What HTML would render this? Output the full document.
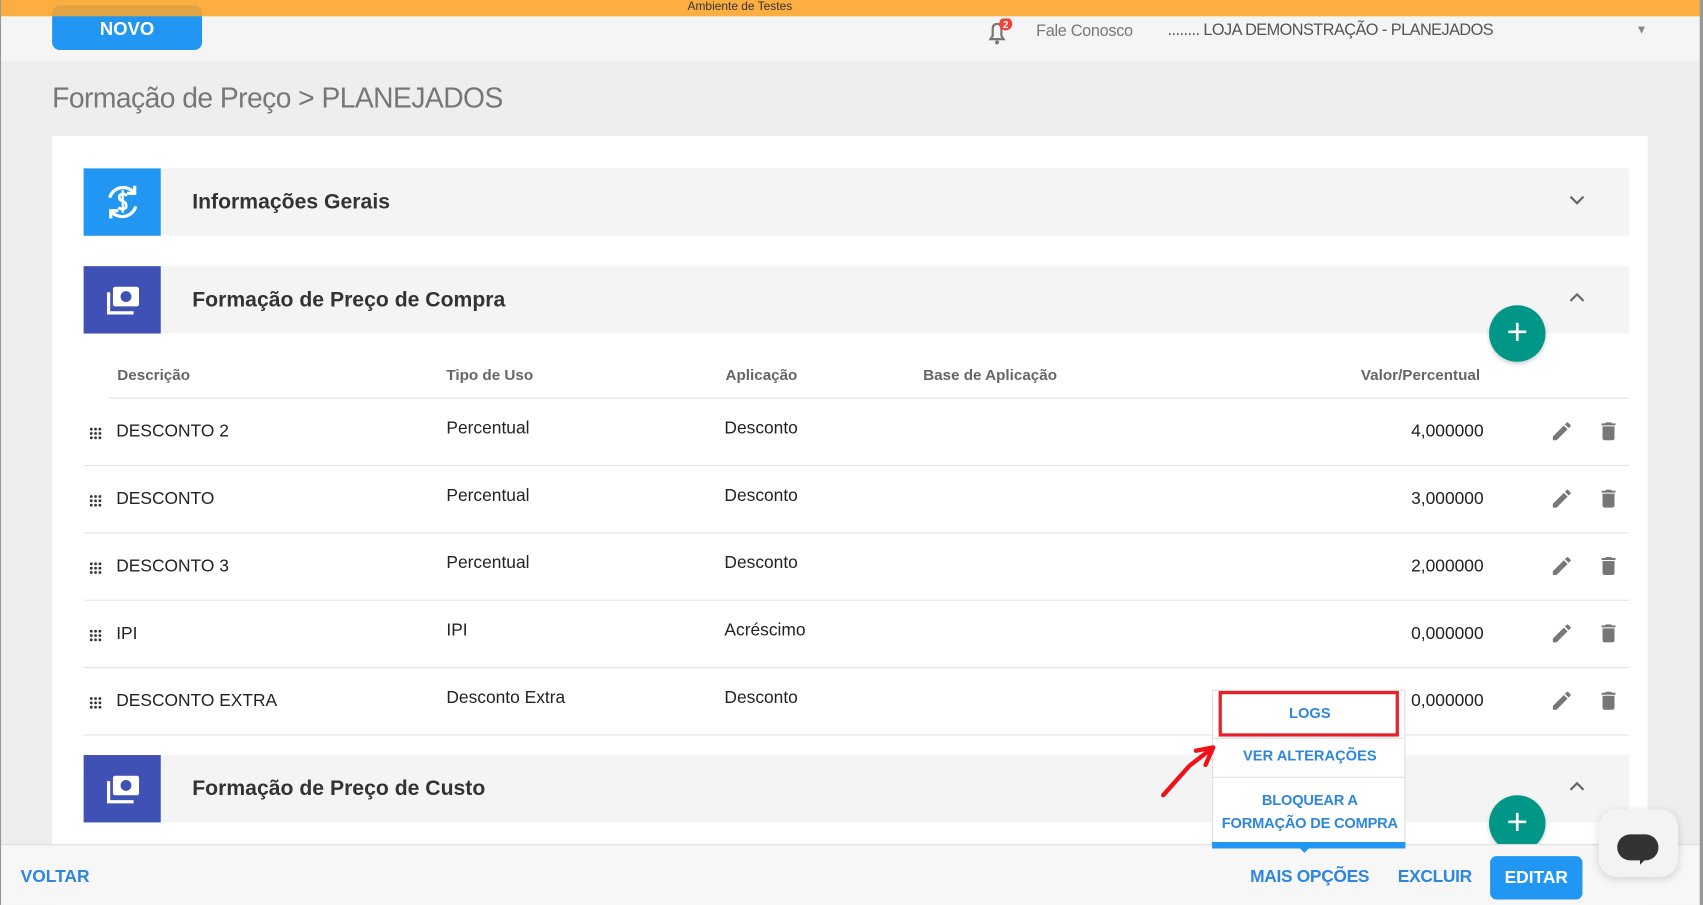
<!DOCTYPE html>
<html><head><meta charset="utf-8"><style>
*{box-sizing:border-box;margin:0;padding:0}
html,body{width:1703px;height:905px;overflow:hidden;background:#eee;font-family:"Liberation Sans",sans-serif}
#w{position:absolute;left:0;top:0;width:1568px;height:833px;transform:scale(1.0861,1.0864);transform-origin:0 0;background:#eeeeee;overflow:hidden}
.a{position:absolute}
.sec{position:absolute;left:77px;width:1423px;height:62px;background:#f4f4f4}
.sec .ic{position:absolute;left:0;top:0;width:71px;height:62px;display:flex;align-items:center;justify-content:center}
.sec .t{position:absolute;left:100px;top:20px;font-size:19.5px;color:#333;font-weight:bold;letter-spacing:0}
.chev{position:absolute;left:1367px;top:23px}
.th{position:absolute;top:337px;font-size:14px;font-weight:bold;color:#666}
.row{position:absolute;left:77px;width:1423px;height:62px;border-bottom:1px solid #e3e3e3}
.row span{position:absolute;top:22px;font-size:16px;color:#222}
.row .c1{left:30px;top:22px}.row .c2{left:334px;top:19px}.row .c3{left:590px;top:19px}
.row .v{right:134px;top:22px}
.dots{position:absolute;left:5px;top:26px;width:12px;height:12px;background-image:radial-gradient(circle,#333 1.3px,transparent 1.4px);background-size:4px 4px}
.pen{position:absolute;left:1350px;top:19px}
.trash{position:absolute;left:1393px;top:18px}
.fab{position:absolute;width:52px;height:52px;border-radius:50%;background:#009688;color:#fff;font-size:34px;line-height:50px;text-align:center;box-shadow:0 2px 4px rgba(0,0,0,.2)}
.mi{position:absolute;left:0;width:178px;text-align:center;font-size:13.5px;font-weight:bold;color:#2e86de}
</style></head><body><div id="w">
<div class="a" style="left:0;top:15px;width:1568px;height:41px;background:#f5f5f5"></div>
<div class="a" style="left:48px;top:5px;width:138px;height:41px;background:#2196f3;border-radius:7px;color:#fff;font-weight:bold;font-size:17px;text-align:center;line-height:44px">NOVO</div>
<div class="a" style="left:0;top:0;width:1568px;height:15px;background:rgba(255,165,40,.88)"></div>
<div class="a" style="left:633px;top:0;font-size:11px;color:#333;line-height:12px">Ambiente de Testes</div>
<svg class="a" style="left:906px;top:17px" width="30" height="26" viewBox="0 0 30 26"><path d="M6 19 L8 16 L8 10 Q8 5 12 5 Q16 5 16 10 L16 16 L18 19 Z" fill="none" stroke="#777" stroke-width="2"/><circle cx="12" cy="22" r="1.8" fill="#777"/><circle cx="20" cy="5" r="6" fill="#f44336"/><text x="20" y="9" font-size="9" font-weight="bold" fill="#fff" text-anchor="middle" font-family="Liberation Sans">2</text></svg>
<div class="a" style="left:954px;top:20px;font-size:15px;color:#777;letter-spacing:-0.3px">Fale Conosco</div>
<div class="a" style="left:1075px;top:19px;font-size:15px;color:#555;letter-spacing:-0.5px">........ LOJA DEMONSTRAÇÃO - PLANEJADOS</div>
<div class="a" style="left:1506px;top:22px;font-size:11px;color:#888">▼</div>
<div class="a" style="left:48px;top:75px;font-size:26px;color:#777;letter-spacing:-0.5px">Formação de Preço &gt; PLANEJADOS</div>
<div class="a" style="left:48px;top:125px;width:1469px;height:720px;background:#fff"></div>

<div class="sec" style="top:155px"><div class="ic" style="background:#2196f3"><svg width="40" height="40" viewBox="0 0 40 40" fill="none" stroke="#fff" stroke-width="3"><path d="M8 16 A13 13 0 0 1 31 12"/><path d="M32 24 A13 13 0 0 1 9 28"/><path d="M31 5 L31 12 L24 12" /><path d="M9 35 L9 28 L16 28"/><path d="M24 14 Q20 11 17 14 Q16 18 20 19 Q24 21 23 25 Q20 28 16 25" stroke-width="2.5"/><path d="M20 9 L20 30" stroke-width="2"/></svg></div><div class="t">Informações Gerais</div><svg class="chev" width="16" height="12"><path d="M2 3 L8 9 L14 3" fill="none" stroke="#666" stroke-width="2"/></svg></div>

<div class="sec" style="top:245px"><div class="ic" style="background:#3f51b5"><svg width="40" height="40" viewBox="0 0 40 40"><rect x="11" y="8" width="24" height="18" rx="2" fill="#fff"/><ellipse cx="23" cy="17" rx="5" ry="5" fill="#3f51b5"/><path d="M7 13 L7 32 L30 32" fill="none" stroke="#fff" stroke-width="3"/></svg></div><div class="t">Formação de Preço de Compra</div><svg class="chev" width="16" height="12"><path d="M2 9 L8 3 L14 9" fill="none" stroke="#666" stroke-width="2"/></svg></div>
<div class="fab" style="left:1371px;top:281px">+</div>

<div class="th" style="left:108px">Descrição</div>
<div class="th" style="left:411px">Tipo de Uso</div>
<div class="th" style="left:668px">Aplicação</div>
<div class="th" style="left:850px">Base de Aplicação</div>
<div class="th" style="left:1253px">Valor/Percentual</div>
<div class="a" style="left:100px;top:366px;width:1400px;height:1px;background:#e3e3e3"></div>

<div class="row" style="top:367px"><i class="dots"></i><span class="c1">DESCONTO 2</span><span class="c2">Percentual</span><span class="c3">Desconto</span><span class="v">4,000000</span><svg class="pen" width="22" height="22" viewBox="0 0 24 24"><path d="M3 17.25V21h3.75L17.81 9.94l-3.75-3.75L3 17.25zM20.71 7.04a1 1 0 0 0 0-1.41l-2.34-2.34a1 1 0 0 0-1.41 0l-1.83 1.83 3.75 3.75 1.83-1.83z" fill="#777"/></svg><svg class="trash" width="22" height="24" viewBox="0 0 24 24"><path d="M6 19c0 1.1.9 2 2 2h8c1.1 0 2-.9 2-2V7H6v12zM19 4h-3.5l-1-1h-5l-1 1H5v2h14V4z" fill="#777"/></svg></div>
<div class="row" style="top:429px"><i class="dots"></i><span class="c1">DESCONTO</span><span class="c2">Percentual</span><span class="c3">Desconto</span><span class="v">3,000000</span><svg class="pen" width="22" height="22" viewBox="0 0 24 24"><path d="M3 17.25V21h3.75L17.81 9.94l-3.75-3.75L3 17.25zM20.71 7.04a1 1 0 0 0 0-1.41l-2.34-2.34a1 1 0 0 0-1.41 0l-1.830 1.83 3.75 3.75 1.83-1.83z" fill="#777"/></svg><svg class="trash" width="22" height="24" viewBox="0 0 24 24"><path d="M6 19c0 1.1.9 2 2 2h8c1.1 0 2-.9 2-2V7H6v12zM19 4h-3.5l-1-1h-5l-1 1H5v2h14V4z" fill="#777"/></svg></div>
<div class="row" style="top:491px"><i class="dots"></i><span class="c1">DESCONTO 3</span><span class="c2">Percentual</span><span class="c3">Desconto</span><span class="v">2,000000</span><svg class="pen" width="22" height="22" viewBox="0 0 24 24"><path d="M3 17.25V21h3.75L17.81 9.94l-3.75-3.75L3 17.25zM20.71 7.04a1 1 0 0 0 0-1.41l-2.34-2.34a1 1 0 0 0-1.41 0l-1.83 1.83 3.75 3.75 1.83-1.83z" fill="#777"/></svg><svg class="trash" width="22" height="24" viewBox="0 0 24 24"><path d="M6 19c0 1.1.9 2 2 2h8c1.1 0 2-.9 2-2V7H6v12zM19 4h-3.5l-1-1h-5l-1 1H5v2h14V4z" fill="#777"/></svg></div>
<div class="row" style="top:553px"><i class="dots"></i><span class="c1">IPI</span><span class="c2">IPI</span><span class="c3">Acréscimo</span><span class="v">0,000000</span><svg class="pen" width="22" height="22" viewBox="0 0 24 24"><path d="M3 17.25V21h3.75L17.81 9.94l-3.75-3.75L3 17.25zM20.71 7.04a1 1 0 0 0 0-1.41l-2.34-2.34a1 1 0 0 0-1.41 0l-1.83 1.83 3.75 3.75 1.83-1.83z" fill="#777"/></svg><svg class="trash" width="22" height="24" viewBox="0 0 24 24"><path d="M6 19c0 1.1.9 2 2 2h8c1.1 0 2-.9 2-2V7H6v12zM19 4h-3.5l-1-1h-5l-1 1H5v2h14V4z" fill="#777"/></svg></div>
<div class="row" style="top:615px"><i class="dots"></i><span class="c1">DESCONTO EXTRA</span><span class="c2">Desconto Extra</span><span class="c3">Desconto</span><span class="v">0,000000</span><svg class="pen" width="22" height="22" viewBox="0 0 24 24"><path d="M3 17.25V21h3.75L17.81 9.94l-3.75-3.75L3 17.25zM20.71 7.04a1 1 0 0 0 0-1.41l-2.34-2.34a1 1 0 0 0-1.41 0l-1.83 1.83 3.75 3.75 1.83-1.83z" fill="#777"/></svg><svg class="trash" width="22" height="24" viewBox="0 0 24 24"><path d="M6 19c0 1.1.9 2 2 2h8c1.1 0 2-.9 2-2V7H6v12zM19 4h-3.5l-1-1h-5l-1 1H5v2h14V4z" fill="#777"/></svg></div>

<div class="sec" style="top:695px"><div class="ic" style="background:#3f51b5"><svg width="40" height="40" viewBox="0 0 40 40"><rect x="11" y="8" width="24" height="18" rx="2" fill="#fff"/><ellipse cx="23" cy="17" rx="5" ry="5" fill="#3f51b5"/><path d="M7 13 L7 32 L30 32" fill="none" stroke="#fff" stroke-width="3"/></svg></div><div class="t">Formação de Preço de Custo</div><svg class="chev" width="16" height="12"><path d="M2 9 L8 3 L14 9" fill="none" stroke="#666" stroke-width="2"/></svg></div>
<div class="fab" style="left:1371px;top:732px">+</div>

<div class="a" style="left:0;top:777px;width:1568px;height:56px;background:#f7f7f7;border-top:1px solid #ddd"></div>
<div class="a" style="left:19px;top:799px;font-size:16px;font-weight:bold;color:#2e86de">VOLTAR</div>
<div class="a" style="left:1151px;top:799px;font-size:16px;font-weight:bold;color:#2e86de;letter-spacing:-0.3px">MAIS OPÇÕES</div>
<div class="a" style="left:1287px;top:799px;font-size:16px;font-weight:bold;color:#2e86de;letter-spacing:-0.3px">EXCLUIR</div>
<div class="a" style="left:1372px;top:788px;width:85px;height:40px;border-radius:6px;background:#2196f3;color:#fff;font-weight:bold;font-size:16px;text-align:center;line-height:41px">EDITAR</div>

<div class="a" style="left:1116px;top:635px;width:178px;height:145px;background:#fff;border:1px solid #ddd">
<div class="a" style="left:5px;top:0;width:166px;height:42px;border:3px solid #e8202a"></div>
<div class="mi" style="top:13px">LOGS</div>
<div class="a" style="left:0;top:43px;width:176px;height:1px;background:#ddd"></div>
<div class="mi" style="top:52px">VER ALTERAÇÕES</div>
<div class="a" style="left:0;top:79px;width:176px;height:1px;background:#ddd"></div>
<div class="mi" style="top:90px;line-height:21px;letter-spacing:-0.2px">BLOQUEAR A<br>FORMAÇÃO DE COMPRA</div>
<div class="a" style="left:-1px;top:139px;width:178px;height:6px;background:#2196f3"></div>
</div>
<div class="a" style="left:1195px;top:779px;width:0;height:0;border-left:6px solid transparent;border-right:6px solid transparent;border-top:6px solid #2196f3"></div>
<svg class="a" style="left:1065px;top:680px" width="60" height="60"><path d="M6 52 L30 25 L52 8 M52 8 L36 11 M52 8 L45 24" fill="none" stroke="#f01018" stroke-width="4" stroke-linecap="round"/></svg>

<div class="a" style="left:1472px;top:745px;width:73px;height:62px;border-radius:16px;background:#f3f3f3;box-shadow:0 2px 8px rgba(0,0,0,.15)"></div>
<div class="a" style="left:1489px;top:768px;width:38px;height:24px;border-radius:12px;background:#333"></div>
<div class="a" style="left:1510px;top:790px;width:0;height:0;border-left:6px solid #333;border-bottom:6px solid transparent"></div>
<div class="a" style="left:1565px;top:0;width:3px;height:833px;background:#999"></div>
<div class="a" style="left:0;top:0;width:1px;height:833px;background:#999"></div>
</div></body></html>
